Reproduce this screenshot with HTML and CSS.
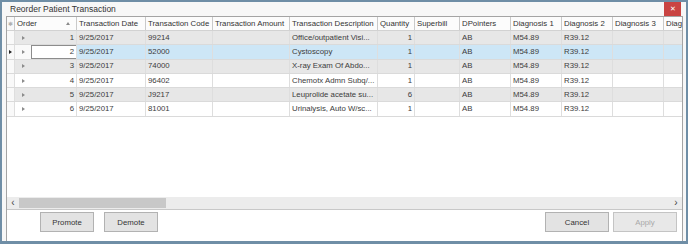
FILE: index.html
```html
<!DOCTYPE html>
<html lang="en">
<head>
    <meta charset="UTF-8">
    <title>Reorder Patient Transaction</title>
    <link rel="stylesheet" href="styles.css">
</head>
<body>
    <div class="window">
        <div class="titlebar">
            <span class="title">Reorder Patient Transaction</span>
            <span class="close">&#x2715;</span>
        </div>
        <div class="panel">
            <div class="grid">
                <div class="row header">
                    <div class="cell ind"><span class="star">&#x2731;</span></div>
                    <div class="cell">Order<span class="sort"></span></div>
                    <div class="cell">Transaction Date</div>
                    <div class="cell">Transaction Code</div>
                    <div class="cell">Transaction Amount</div>
                    <div class="cell">Transaction Description</div>
                    <div class="cell">Quantity</div>
                    <div class="cell">Superbill</div>
                    <div class="cell">DPointers</div>
                    <div class="cell">Diagnosis 1</div>
                    <div class="cell">Diagnosis 2</div>
                    <div class="cell">Diagnosis 3</div>
                    <div class="cell">Diagnosis 4</div>
                </div>

                <div class="row alt">
                    <div class="cell ind"></div>
                    <div class="cell order"><span class="expand"><i class="tri"></i></span><span class="num">1</span></div>
                    <div class="cell">9/25/2017</div>
                    <div class="cell">99214</div>
                    <div class="cell"></div>
                    <div class="cell">Office/outpatient Visi...</div>
                    <div class="cell right">1</div>
                    <div class="cell"></div>
                    <div class="cell">AB</div>
                    <div class="cell">M54.89</div>
                    <div class="cell">R39.12</div>
                    <div class="cell"></div>
                    <div class="cell"></div>
                </div>
                <div class="row selected">
                    <div class="cell ind"><i class="tri dark"></i></div>
                    <div class="cell order"><span class="expand"><i class="tri"></i></span><span class="num focus">2</span></div>
                    <div class="cell">9/25/2017</div>
                    <div class="cell">52000</div>
                    <div class="cell"></div>
                    <div class="cell">Cystoscopy</div>
                    <div class="cell right">1</div>
                    <div class="cell"></div>
                    <div class="cell">AB</div>
                    <div class="cell">M54.89</div>
                    <div class="cell">R39.12</div>
                    <div class="cell"></div>
                    <div class="cell"></div>
                </div>
                <div class="row alt">
                    <div class="cell ind"></div>
                    <div class="cell order"><span class="expand"><i class="tri"></i></span><span class="num">3</span></div>
                    <div class="cell">9/25/2017</div>
                    <div class="cell">74000</div>
                    <div class="cell"></div>
                    <div class="cell">X-ray Exam Of Abdo...</div>
                    <div class="cell right">1</div>
                    <div class="cell"></div>
                    <div class="cell">AB</div>
                    <div class="cell">M54.89</div>
                    <div class="cell">R39.12</div>
                    <div class="cell"></div>
                    <div class="cell"></div>
                </div>
                <div class="row">
                    <div class="cell ind"></div>
                    <div class="cell order"><span class="expand"><i class="tri"></i></span><span class="num">4</span></div>
                    <div class="cell">9/25/2017</div>
                    <div class="cell">96402</div>
                    <div class="cell"></div>
                    <div class="cell">Chemotx Admn Subq/...</div>
                    <div class="cell right">1</div>
                    <div class="cell"></div>
                    <div class="cell">AB</div>
                    <div class="cell">M54.89</div>
                    <div class="cell">R39.12</div>
                    <div class="cell"></div>
                    <div class="cell"></div>
                </div>
                <div class="row alt">
                    <div class="cell ind"></div>
                    <div class="cell order"><span class="expand"><i class="tri"></i></span><span class="num">5</span></div>
                    <div class="cell">9/25/2017</div>
                    <div class="cell">J9217</div>
                    <div class="cell"></div>
                    <div class="cell">Leuprolide acetate su...</div>
                    <div class="cell right">6</div>
                    <div class="cell"></div>
                    <div class="cell">AB</div>
                    <div class="cell">M54.89</div>
                    <div class="cell">R39.12</div>
                    <div class="cell"></div>
                    <div class="cell"></div>
                </div>
                <div class="row">
                    <div class="cell ind"></div>
                    <div class="cell order"><span class="expand"><i class="tri"></i></span><span class="num">6</span></div>
                    <div class="cell">9/25/2017</div>
                    <div class="cell">81001</div>
                    <div class="cell"></div>
                    <div class="cell">Urinalysis, Auto W/sc...</div>
                    <div class="cell right">1</div>
                    <div class="cell"></div>
                    <div class="cell">AB</div>
                    <div class="cell">M54.89</div>
                    <div class="cell">R39.12</div>
                    <div class="cell"></div>
                    <div class="cell"></div>
                </div>
            </div>

            <div class="hscroll">
                <span class="arrow">&lsaquo;</span>
                <div class="track"><div class="thumb"></div></div>
                <span class="arrow">&rsaquo;</span>
            </div>

            <div class="buttons">
                <div class="group">
                    <button class="btn">Promote</button>
                    <button class="btn">Demote</button>
                </div>
                <div class="group tight">
                    <button class="btn wide">Cancel</button>
                    <button class="btn wide" disabled>Apply</button>
                </div>
            </div>
        </div>
    </div>
</body>
</html>
```

FILE: styles.css
```css
* {
    box-sizing: border-box;
}

body {
    margin: 0;
    font-family: 'Liberation Sans', Arial, sans-serif;
    font-size: 7.8px;
    color: #3c3c3c;
    background: #ffffff;
}

.window {
    width: 688px;
    height: 244px;
    border: 2px solid #6f8ea6;
    border-bottom-width: 3px;
    background: #f7f7f7;
    display: flex;
    flex-direction: column;
    padding: 0 3px 0 4px;
}

.titlebar {
    height: 14px;
    display: flex;
    justify-content: space-between;
    align-items: flex-start;
    padding-left: 4px;
}

.title {
    font-size: 8.5px;
    line-height: 14px;
    color: #333;
}

.close {
    width: 17px;
    height: 14px;
    margin-right: 2px;
    background: #c94442;
    color: #fff;
    font-size: 7px;
    line-height: 14px;
    text-align: center;
}

.panel {
    flex: 1;
    display: flex;
    flex-direction: column;
    border: 1px solid #a4a4a4;
    border-bottom: none;
    background: #ffffff;
    overflow: hidden;
}

.grid {
    flex: 1;
    overflow: hidden;
}

.row {
    display: grid;
    grid-template-columns: 8px 62px 69px 67px 77px 88px 37px 45px 51px 51px 51px 51px 60px;
    height: 14.3px;
    background: #ffffff;
    border-bottom: 1px solid #dadada;
}

.row.alt {
    background: #e7e7e7;
}

.row.selected {
    background: #cde6f6;
}

.row.header {
    height: 14px;
    background: #fcfcfc;
    border-bottom: 1px solid #d2d2d2;
}

.cell {
    border-right: 1px solid #dedede;
    padding: 0 2px;
    white-space: nowrap;
    overflow: hidden;
    display: flex;
    align-items: center;
    line-height: 1;
}

.header .cell {
    border-right-color: #cacaca;
    color: #333;
}

.cell.right {
    justify-content: flex-end;
}

.cell.ind {
    background: #f9f9f9;
    padding: 0;
    justify-content: center;
}

.star {
    color: #b0b0b0;
    font-size: 6px;
}

.sort {
    margin-left: auto;
    margin-right: 4px;
    border-left: 2.5px solid transparent;
    border-right: 2.5px solid transparent;
    border-bottom: 3px solid #8a8a8a;
}

.cell.order {
    padding: 0;
}

.expand {
    width: 16px;
    height: 100%;
    display: flex;
    align-items: center;
    justify-content: center;
}

.selected .expand {
    background: #f9f9f9;
}

.num {
    flex: 1;
    height: 100%;
    display: flex;
    align-items: center;
    justify-content: flex-end;
    padding-right: 2px;
}

.num.focus {
    background: #ffffff;
    border: 1px solid #8c8c8c;
    border-right: none;
}

.tri {
    display: block;
    border-top: 2px solid transparent;
    border-bottom: 2px solid transparent;
    border-left: 3px solid #8c8c8c;
}

.tri.dark {
    border-left-color: #222;
}

.hscroll {
    height: 13px;
    display: flex;
    align-items: stretch;
    background: #ececec;
    border-bottom: 1px solid #c8c8c8;
}

.arrow {
    width: 12px;
    font-size: 10px;
    line-height: 11px;
    text-align: center;
    color: #444;
}

.track {
    flex: 1;
    padding: 1px 0;
}

.thumb {
    width: 147px;
    height: 100%;
    background: #c8c8c8;
}

.buttons {
    height: 31px;
    display: flex;
    justify-content: space-between;
    padding: 2px 5px 0 33px;
    background: #ffffff;
}

.group {
    display: flex;
    gap: 10px;
}

.group.tight {
    gap: 4px;
}

.btn {
    width: 54px;
    height: 20px;
    font-family: 'Liberation Sans', Arial, sans-serif;
    font-size: 7.8px;
    color: #333;
    background: #e3e3e3;
    border: 1px solid #b2b2b2;
    padding: 0;
}

.btn.wide {
    width: 64px;
}

.btn:disabled {
    color: #a8a8a8;
    background: #e8e8e8;
    border-color: #c4c4c4;
}
```
